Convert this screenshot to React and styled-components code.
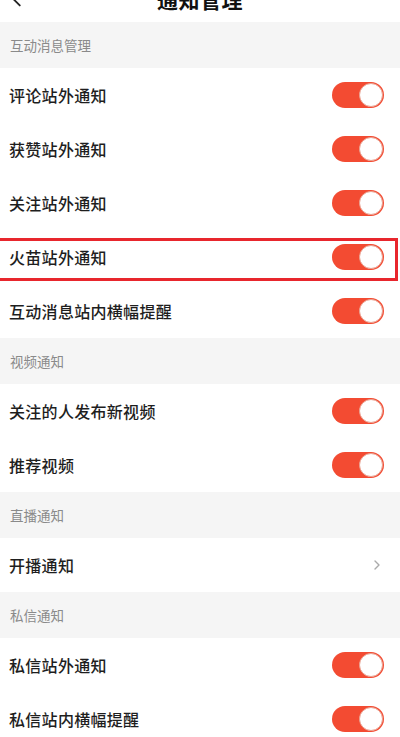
import React from 'react';
import styled, { createGlobalStyle } from 'styled-components';

const GlobalStyle = createGlobalStyle`
  html, body {
    margin: 0;
    padding: 0;
    background: #ffffff;
    font-family: "Noto Sans CJK SC", "Noto Sans", sans-serif;
  }
`;

const Page = styled.div`
  width: 400px;
  height: 737px;
  overflow: hidden;
  background: #ffffff;
`;

const Header = styled.header`
  height: 46px;
  margin-top: -24px;
  display: flex;
  align-items: center;
  justify-content: center;
  position: relative;
  background: #ffffff;
`;

const BackButton = styled.button`
  position: absolute;
  left: 6px;
  top: 50%;
  transform: translateY(-50%);
  border: none;
  background: none;
  padding: 0;
  display: flex;
  color: #222;
`;

const Title = styled.h1`
  margin: 0;
  font-size: 21px;
  font-weight: 700;
  color: #111;
  letter-spacing: 0.5px;
`;

const SectionHeader = styled.div`
  height: 46px;
  display: flex;
  align-items: center;
  padding-left: 10px;
  background: #f5f5f5;
  font-size: 13.5px;
  color: #8a8a8a;
`;

const Row = styled.div`
  height: 54px;
  display: flex;
  align-items: center;
  justify-content: space-between;
  padding: 0 16px 0 9px;
  background: #ffffff;
  position: relative;

  ${({ $highlight }) =>
    $highlight &&
    `
    &::after {
      content: '';
      position: absolute;
      top: 8px;
      bottom: 3px;
      left: -4px;
      right: 2px;
      border: 3px solid #e8262d;
      pointer-events: none;
    }
  `}
`;

const Label = styled.span`
  font-size: 16px;
  font-weight: 500;
  color: #1e1e1e;
  letter-spacing: 0.3px;
`;

const Toggle = styled.div`
  width: 52px;
  height: 26px;
  border-radius: 13px;
  background: #f34b32;
  position: relative;
  flex-shrink: 0;
`;

const Knob = styled.div`
  position: absolute;
  right: 1px;
  top: 1px;
  width: 24px;
  height: 24px;
  box-sizing: border-box;
  border-radius: 50%;
  background: #ffffff;
  border: 1px solid #e9a08f;
`;

const Chevron = styled.span`
  display: flex;
  margin-right: 2px;
  color: #aaaaaa;
`;

const sections = [
  {
    title: '互动消息管理',
    rows: [
      { label: '评论站外通知' },
      { label: '获赞站外通知' },
      { label: '关注站外通知' },
      { label: '火苗站外通知', highlight: true },
      { label: '互动消息站内横幅提醒' },
    ],
  },
  {
    title: '视频通知',
    rows: [{ label: '关注的人发布新视频' }, { label: '推荐视频' }],
  },
  {
    title: '直播通知',
    rows: [{ label: '开播通知', link: true }],
  },
  {
    title: '私信通知',
    rows: [{ label: '私信站外通知' }, { label: '私信站内横幅提醒' }],
  },
];

const App = () => (
  <Page>
    <GlobalStyle />
    <Header>
      <BackButton>
        <svg width="22" height="22" viewBox="0 0 24 24" fill="none" stroke="currentColor" strokeWidth="2" strokeLinecap="round" strokeLinejoin="round">
          <path d="M15 5l-7 7 7 7" />
        </svg>
      </BackButton>
      <Title>通知管理</Title>
    </Header>
    {sections.map((section) => (
      <React.Fragment key={section.title}>
        <SectionHeader>{section.title}</SectionHeader>
        {section.rows.map((row) => (
          <Row key={row.label} $highlight={row.highlight}>
            <Label>{row.label}</Label>
            {row.link ? (
              <Chevron>
                <svg width="10" height="12" viewBox="0 0 10 12" fill="none" stroke="currentColor" strokeWidth="1.4" strokeLinecap="round" strokeLinejoin="round">
                  <path d="M3 2l4 4-4 4" />
                </svg>
              </Chevron>
            ) : (
              <Toggle>
                <Knob />
              </Toggle>
            )}
          </Row>
        ))}
      </React.Fragment>
    ))}
  </Page>
);

export default App;
